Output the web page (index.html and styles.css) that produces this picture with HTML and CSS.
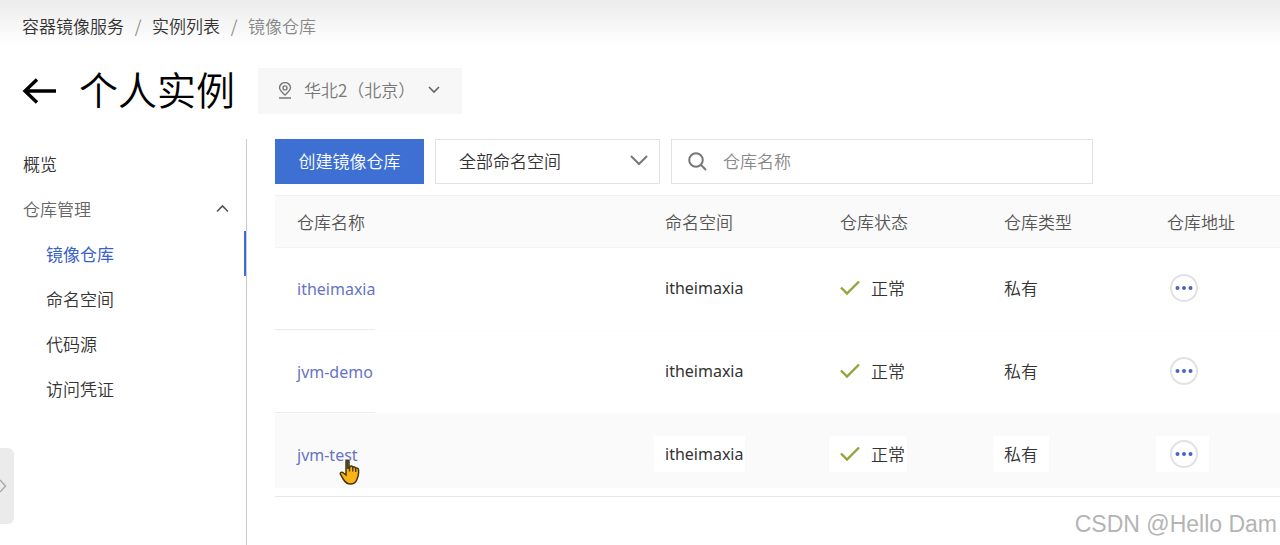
FILE: index.html
```html
<!DOCTYPE html>
<html lang="zh-CN">
<head>
<meta charset="utf-8">
<title>镜像仓库</title>
<link rel="stylesheet" href="styles.css">
</head>
<body>
<div class="page">
  <header class="header">
    <nav class="breadcrumb" aria-label="面包屑">
      <a href="#">容器镜像服务</a><span class="sep">/</span><a href="#">实例列表</a><span class="sep">/</span><span class="current">镜像仓库</span>
    </nav>
    <div class="title-row">
      <a class="back" href="#" aria-label="返回">
        <svg width="34" height="28" viewBox="0 0 34 28" fill="none" stroke="#000" stroke-width="3.4"><path d="M34 14H3M15 2.500L3 14l12 11.500"/></svg>
      </a>
      <h1 class="title">个人实例</h1>
      <button class="region" type="button">
        <svg width="14" height="17" viewBox="0 0 14 17" fill="none" stroke="#777" stroke-width="1.4"><path d="M7 13C3.500 10 1.500 8.300 1.500 5.800a5.500 5.200 0 0 1 11 0C12.500 8.300 10.500 10 7 13zM1 16h12"/><circle cx="7" cy="5.900" r="2"/></svg>
        <span class="region-name">华北2（北京）</span>
        <svg class="region-arrow" width="12" height="8" viewBox="0 0 12 8" fill="none" stroke="#666" stroke-width="1.600"><path d="M1 1l5 5 5-5"/></svg>
      </button>
    </div>
  </header>
  <div class="body">
    <nav class="sidebar" aria-label="菜单">
      <a class="item" href="#">概览</a>
      <button class="item group" type="button">仓库管理
        <svg width="13" height="9" viewBox="0 0 13 9" fill="none" stroke="#555" stroke-width="1.600"><path d="M1 7.500l5.500-5.500L12 7.500"/></svg>
      </button>
      <a class="item sub active" href="#">镜像仓库</a>
      <a class="item sub" href="#">命名空间</a>
      <a class="item sub" href="#">代码源</a>
      <a class="item sub" href="#">访问凭证</a>
    </nav>
    <main class="main">
      <div class="toolbar">
        <button class="create" type="button">创建镜像仓库</button>
        <div class="select-box">
          <select class="select" aria-label="命名空间"><option>全部命名空间</option></select>
          <svg class="select-arrow" width="18" height="11" viewBox="0 0 18 11" fill="none" stroke="#777" stroke-width="2"><path d="M1 1l8 8 8-8"/></svg>
        </div>
        <label class="search">
          <svg width="19" height="19" viewBox="0 0 19 19" fill="none" stroke="#777" stroke-width="2"><circle cx="8" cy="8" r="6.800"/><path d="M12.800 12.800L18 18"/></svg>
          <input class="search-input" type="text" placeholder="仓库名称" aria-label="仓库名称">
        </label>
      </div>
      <table class="table">
        <colgroup><col class="c-name"><col class="c-space"><col class="c-state"><col class="c-type"><col></colgroup>
        <thead>
          <tr><th>仓库名称</th><th>命名空间</th><th>仓库状态</th><th>仓库类型</th><th>仓库地址</th></tr>
        </thead>
        <tbody>
          <tr>
            <td><a class="repo" href="#">itheimaxia</a></td>
            <td><span class="cell">itheimaxia</span></td>
            <td><span class="cell"><svg class="check" width="20" height="16" viewBox="0 0 20 16" fill="none" stroke="#8fa63c" stroke-width="2.400"><path d="M1 7.500l6 6L19 1.500"/></svg>正常</span></td>
            <td><span class="cell">私有</span></td>
            <td><span class="cell"><button class="more" type="button" aria-label="查看地址"><svg width="18" height="4" viewBox="0 0 18 4" fill="#4c5fcb"><circle cx="2.500" cy="2" r="2"/><circle cx="9" cy="2" r="2"/><circle cx="15.500" cy="2" r="2"/></svg></button></span></td>
          </tr>
          <tr>
            <td><a class="repo" href="#">jvm-demo</a></td>
            <td><span class="cell">itheimaxia</span></td>
            <td><span class="cell"><svg class="check" width="20" height="16" viewBox="0 0 20 16" fill="none" stroke="#8fa63c" stroke-width="2.400"><path d="M1 7.500l6 6L19 1.500"/></svg>正常</span></td>
            <td><span class="cell">私有</span></td>
            <td><span class="cell"><button class="more" type="button" aria-label="查看地址"><svg width="18" height="4" viewBox="0 0 18 4" fill="#4c5fcb"><circle cx="2.500" cy="2" r="2"/><circle cx="9" cy="2" r="2"/><circle cx="15.500" cy="2" r="2"/></svg></button></span></td>
          </tr>
          <tr class="hover">
            <td><a class="repo" href="#">jvm-test<svg class="pointer" width="22" height="27" viewBox="0 0 22 27"><path d="M7 2.500C7 .8 10 .8 10 2.500V10l1-2.500c1-1 2.500-.5 2.800.8 1-.9 2.400-.4 2.700.9 1.200-.6 2.800 0 3 1.500.4 4-.2 7-1.500 9.500-1 3-3.500 4.800-6.500 4.800-3.500 0-5.500-2-7-4.500L1.500 15.500c-.8-2 1.500-3 3-1.500L7 16z" fill="#f9b414" stroke="#4a3413" stroke-width="1.500"/><path d="M7.300 2h2.400v8H7.300z" fill="#3f4a2a"/><path d="M10.500 8v4.500M13.800 8.500v4M16.700 9.500v3.500" fill="none" stroke="#4a3413" stroke-width="1.400"/></svg></a></td>
            <td><span class="cell">itheimaxia</span></td>
            <td><span class="cell"><svg class="check" width="20" height="16" viewBox="0 0 20 16" fill="none" stroke="#8fa63c" stroke-width="2.400"><path d="M1 7.500l6 6L19 1.500"/></svg>正常</span></td>
            <td><span class="cell">私有</span></td>
            <td><span class="cell"><button class="more" type="button" aria-label="查看地址"><svg width="18" height="4" viewBox="0 0 18 4" fill="#4c5fcb"><circle cx="2.500" cy="2" r="2"/><circle cx="9" cy="2" r="2"/><circle cx="15.500" cy="2" r="2"/></svg></button></span></td>
          </tr>
        </tbody>
      </table>
    </main>
  </div>
  <button class="drawer" type="button" aria-label="展开">
    <svg width="7" height="14" viewBox="0 0 7 14" fill="none" stroke="#aaa" stroke-width="1.500"><path d="M0 1l5.500 6L0 13"/></svg>
  </button>
  <div class="watermark">CSDN @Hello Dam</div>
</div>
</body>
</html>
```
FILE: styles.css
```css
* {
  box-sizing: border-box;
}

body {
  margin: 0;
  font-family: "Noto Sans CJK SC", sans-serif;
  font-size: 17px;
  font-weight: 350;
  line-height: 22px;
  color: #333;
  background: #fff;
}

a {
  color: inherit;
  text-decoration: none;
}

button,
select,
input {
  font: inherit;
  color: inherit;
  margin: 0;
  padding: 0;
  border: 0;
  background: none;
}

svg {
  display: block;
  flex: none;
}

.page {
  position: relative;
  display: flex;
  flex-direction: column;
  min-height: 100vh;
  overflow: hidden;
}

.header {
  padding: 15px 22px 25px;
  background: linear-gradient(#ececec, #fff 46px);
}

.breadcrumb {
  display: flex;
  align-items: center;
}

.sep {
  width: 28px;
  text-align: center;
  color: #888;
}

.current {
  color: #888;
}

.title-row {
  display: flex;
  align-items: center;
  height: 46px;
  margin-top: 31px;
}

.title {
  margin: 0 23px;
  padding-bottom: 6px;
  font-size: 39px;
  line-height: 40px;
  font-weight: 350;
  color: #000;
}

.region {
  display: flex;
  align-items: center;
  height: 46px;
  padding: 0 22px 2px 20px;
  background: #f7f7f8;
  color: #777;
}

.region-name {
  margin-left: 12px;
}

.region-arrow {
  margin-left: 13px;
}

.body {
  flex: 1;
  display: flex;
}

.sidebar {
  flex: none;
  width: 247px;
  padding-top: 2px;
  border-right: 1px solid #ccc;
}

.item {
  display: flex;
  align-items: center;
  justify-content: space-between;
  width: 100%;
  height: 45px;
  padding: 0 17px 0 23px;
  text-align: left;
}

.group {
  color: #666;
}

.sub {
  padding-left: 46px;
}

.active {
  color: #3b62c9;
  font-weight: 400;
  border-right: 2px solid #3f6ad8;
}

.main {
  flex: 1;
  min-width: 0;
  padding-left: 28px;
}

.toolbar {
  display: flex;
  gap: 11px;
  height: 45px;
  margin-bottom: 11px;
}

.create {
  width: 149px;
  padding-bottom: 2px;
  background: #3d70d2;
  color: #fff;
}

.select-box {
  position: relative;
  width: 225px;
}

.select {
  width: 100%;
  height: 100%;
  padding: 0 40px 2px 23px;
  border: 1px solid #e2e2e2;
  appearance: none;
}

.select-arrow {
  position: absolute;
  top: 16px;
  right: 12px;
  pointer-events: none;
}

.search {
  display: flex;
  align-items: center;
  gap: 16px;
  width: 422px;
  padding: 0 16px;
  border: 1px solid #e2e2e2;
}

.search-input {
  flex: 1;
  min-width: 0;
  padding-bottom: 2px;
  outline: 0;
}

.search-input::placeholder {
  color: #888;
  opacity: 1;
}

.table {
  width: 100%;
  table-layout: fixed;
  border-collapse: separate;
  border-spacing: 0;
}

.c-name {
  width: 368px;
}

.c-space {
  width: 175px;
}

.c-state {
  width: 164px;
}

.c-type {
  width: 163px;
}

.table th {
  height: 53px;
  padding: 0 22px;
  border-top: 1px solid #f0f0f0;
  border-bottom: 1px solid #f4f4f4;
  background: #fafafa;
  color: #555;
  font-weight: 350;
  text-align: left;
}

.table td {
  height: 83px;
  padding: 0 11px 2px;
  border-bottom: 1px solid #fdfdfd;
}

.table td:first-child {
  padding-left: 22px;
  background: linear-gradient(#ececec, #ececec) left bottom / 100px 1px no-repeat;
}

.table .hover td {
  border-bottom-color: #e8e8e8;
  background: linear-gradient(#fafafa, #fafafa) left top / 100% 74px no-repeat;
}

.repo {
  position: relative;
  font-family: "Noto Sans", sans-serif;
  font-size: 16px;
  font-weight: 400;
  color: #6674c4;
}

.pointer {
  position: absolute;
  left: 42px;
  top: 15px;
}

.cell {
  display: inline-flex;
  align-items: center;
  height: 36px;
  padding: 0 11px;
  vertical-align: middle;
}

.hover .cell {
  background: #fff;
}

td:nth-child(2) .cell {
  padding-right: 2px;
  font-family: "Noto Sans", sans-serif;
  font-size: 16px;
  font-weight: 400;
}

td:nth-child(3) .cell {
  padding-right: 2px;
}

.check {
  margin-right: 11px;
}

.more {
  display: flex;
  align-items: center;
  justify-content: center;
  width: 28px;
  height: 28px;
  margin-left: 3px;
  border: 2px solid #e2e2e4;
  border-radius: 50%;
}

.drawer {
  position: absolute;
  left: 0;
  top: 448px;
  display: flex;
  align-items: center;
  width: 14px;
  height: 76px;
  border-radius: 0 6px 6px 0;
  background: #ebebeb;
}

.watermark {
  position: absolute;
  right: 3px;
  bottom: 6px;
  font-family: "Liberation Sans", sans-serif;
  font-size: 23px;
  font-weight: 400;
  line-height: 30px;
  color: #b4b4b4;
}
```
